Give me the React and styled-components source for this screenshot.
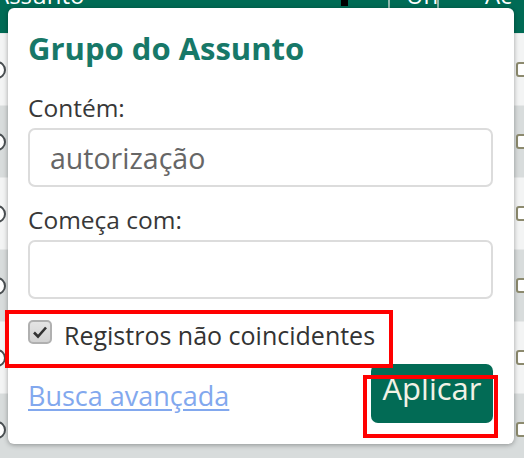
import React from "react";
import styled, { createGlobalStyle } from "styled-components";

const GlobalStyle = createGlobalStyle`
  html, body {
    margin: 0;
    padding: 0;
    background: #f4f5f5;
  }
  * { box-sizing: border-box; }
`;

const Page = styled.div`
  position: relative;
  width: 524px;
  height: 458px;
  overflow: hidden;
  font-family: "Open Sans", "DejaVu Sans", sans-serif;
`;

const Grid = styled.div`
  display: flex;
  flex-direction: column;
`;

const HeadRow = styled.div`
  display: grid;
  grid-template-columns: 343px 45px 49px 1fr;
  height: 33px;
  background: #006b55;
  color: #fff;
  font-size: 24px;
  line-height: 1;
  overflow: hidden;
`;

const HeadCell = styled.div`
  padding-left: ${(p) => p.$pad || 0}px;
  margin-top: -17px;
  border-left: ${(p) => (p.$line ? "2px solid #8fb8ad" : "none")};
  white-space: nowrap;
`;

const Grip = styled.span`
  display: block;
  width: 7px;
  height: 6px;
  background: #000;
  margin: 17px 0 0 -2px;
`;

const Row = styled.div`
  display: flex;
  justify-content: space-between;
  align-items: center;
  height: 72px;
  background: ${(p) => (p.$alt ? "#d8dcdc" : "#f3f4f4")};
  border-top: 1px solid #e6e8e8;
`;

const Radio = styled.span`
  width: 18px;
  height: 18px;
  margin-left: -12px;
  border: 2px solid #4a4f52;
  border-radius: 50%;
  background: #fff;
`;

const Box = styled.span`
  width: 15px;
  height: 15px;
  margin-right: -7px;
  border: 2px solid #8c8a6e;
  border-radius: 3px;
  background: #fff;
`;

const Popup = styled.div`
  position: absolute;
  left: 8px;
  top: 8px;
  width: 506px;
  height: 436px;
  background: #fff;
  border-radius: 6px;
  box-shadow: 0 1px 5px rgba(0, 0, 0, 0.35);
  padding: 20px 21px 0 20px;
  display: flex;
  flex-direction: column;
`;

const Title = styled.h2`
  margin: 0 0 24px;
  font-size: 31px;
  font-weight: 700;
  line-height: 40px;
  color: #177868;
`;

const Label = styled.label`
  display: block;
  font-size: 24.5px;
  line-height: 32px;
  color: #383838;
  margin-bottom: 4px;
`;

const Field = styled.input`
  display: block;
  width: 100%;
  height: 59px;
  border: 2px solid #dcdcdc;
  border-radius: 7px;
  padding: 0 20px;
  font-family: inherit;
  font-size: 28.5px;
  color: #666;
  margin-bottom: ${(p) => p.$gap || 0}px;
  outline: none;
`;

const CheckRow = styled.label`
  display: flex;
  align-items: flex-start;
  gap: 12px;
  margin-top: 20px;
  font-size: 25px;
  line-height: 32px;
  color: #333;
`;

const Tick = styled.span`
  display: flex;
  align-items: center;
  justify-content: center;
  width: 24px;
  height: 24px;
  margin-top: 1px;
  border: 2px solid #b0b0b0;
  border-radius: 5px;
  background: linear-gradient(#e4e4e4, #d2d2d2);
`;

const Footer = styled.div`
  display: flex;
  justify-content: space-between;
  align-items: center;
  margin-top: 13px;
`;

const Link = styled.a`
  font-size: 27px;
  color: #82a8ee;
  text-decoration: underline;
  text-underline-offset: 3px;
  margin-top: 4px;
`;

const Apply = styled.button`
  height: 59px;
  width: 122px;
  border: none;
  border-radius: 7px;
  background: #026b55;
  color: #f2f2e6;
  font-family: inherit;
  font-size: 31px;
  padding: 0 0 12px;
`;

const Mark = styled.div`
  position: absolute;
  left: ${(p) => p.$x}px;
  top: ${(p) => p.$y}px;
  width: ${(p) => p.$w}px;
  height: ${(p) => p.$h}px;
  border: 4px solid #ff0000;
  pointer-events: none;
`;

const rows = [false, true, false, true, false, true];

export default function App() {
  return (
    <>
      <GlobalStyle />
      <Page>
        <Grid>
          <HeadRow>
            <HeadCell style={{ marginLeft: -6 }}>Assunto</HeadCell>
            <HeadCell><Grip /></HeadCell>
            <HeadCell $line $pad={16}>Un</HeadCell>
            <HeadCell $line $pad={46}>Ac</HeadCell>
          </HeadRow>
          {rows.map((alt, i) => (
            <Row key={i} $alt={alt}>
              <Radio />
              <Box />
            </Row>
          ))}
        </Grid>

        <Popup>
          <Title>Grupo do Assunto</Title>
          <Label>Contém:</Label>
          <Field defaultValue="autorização" $gap={17} />
          <Label>Começa com:</Label>
          <Field />
          <CheckRow>
            <Tick>
              <svg width="16" height="14" viewBox="0 0 16 14">
                <path d="M2 7.5 L6 11.5 L14 2.5" fill="none" stroke="#333" strokeWidth="2.6" />
              </svg>
            </Tick>
            Registros não coincidentes
          </CheckRow>
          <Footer>
            <Link href="#">Busca avançada</Link>
            <Apply>Aplicar</Apply>
          </Footer>
        </Popup>

        <Mark $x={5} $y={310} $w={388} $h={58} />
        <Mark $x={363} $y={375} $w={135} $h={63} />
      </Page>
    </>
  );
}
